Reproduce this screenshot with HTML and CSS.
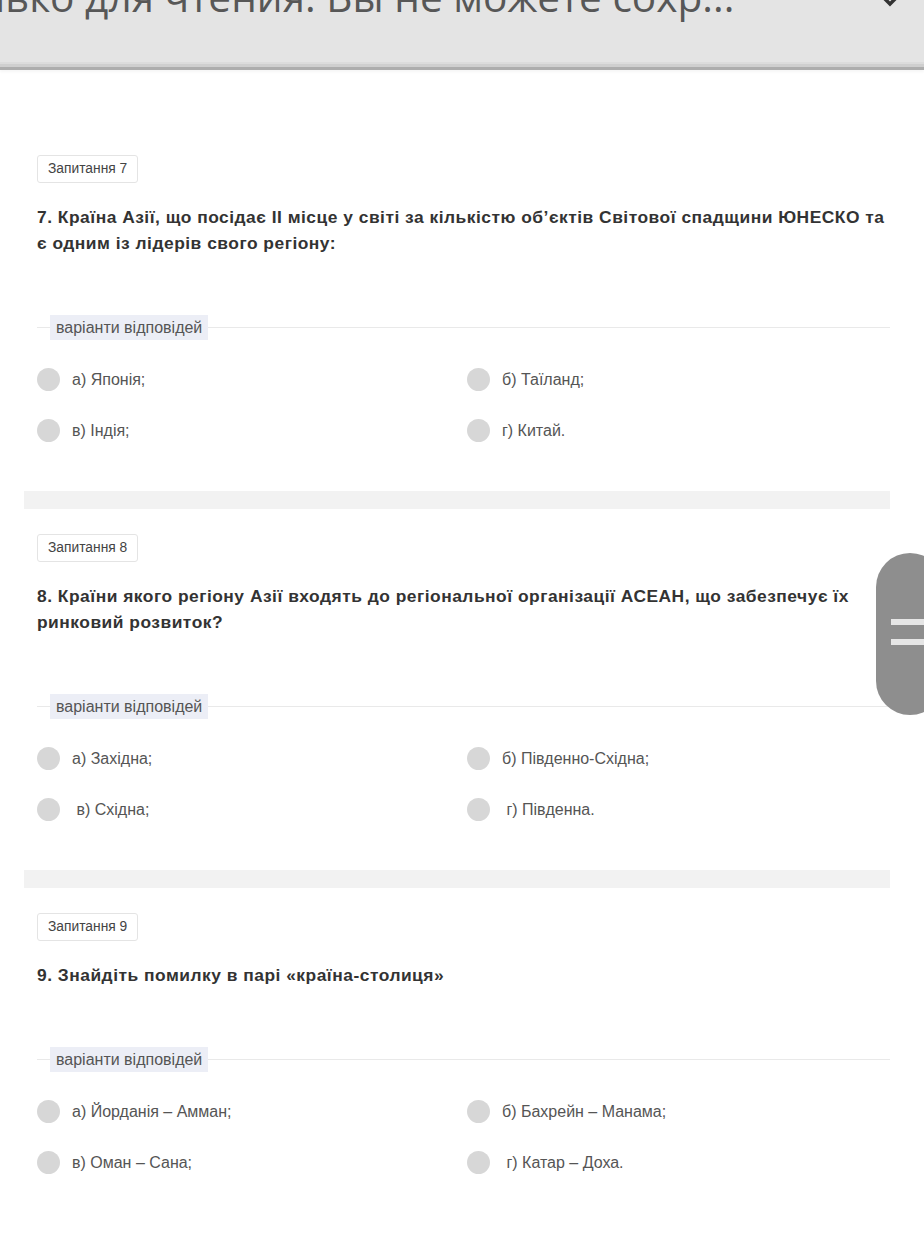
FILE: index.html
```html
<!DOCTYPE html>
<html lang="uk">
<head>
<meta charset="utf-8">
<title>Тест</title>
<link rel="stylesheet" href="styles.css">
</head>
<body>
<header class="topbar">
  <div class="topbar-text">лько для чтения. Вы не можете сохр...</div>
  <svg class="chevron" width="24" height="24" viewBox="0 0 24 24"><path d="M3 8 L12 17 L21 8" fill="none" stroke="#333" stroke-width="3.5"/></svg>
</header>
<div class="topbar-rule"></div>

<main class="quiz">
  <section class="question first">
    <div class="q-tag">Запитання 7</div>
    <h2 class="q-title">7. Країна Азії, що посідає ІІ місце у світі за кількістю об’єктів Світової спадщини ЮНЕСКО та є одним із лідерів свого регіону:</h2>
    <div class="answers">
      <div class="answers-head"><span class="answers-label">варіанти відповідей</span></div>
      <div class="options">
        <label class="option"><span class="radio"></span><span class="opt-text">а) Японія;</span></label>
        <label class="option"><span class="radio"></span><span class="opt-text">б) Таїланд;</span></label>
        <label class="option"><span class="radio"></span><span class="opt-text">в) Індія;</span></label>
        <label class="option"><span class="radio"></span><span class="opt-text">г) Китай.</span></label>
      </div>
    </div>
  </section>
  <div class="divider"></div>

  <section class="question">
    <div class="q-tag">Запитання 8</div>
    <h2 class="q-title">8. Країни якого регіону Азії входять до регіональної організації АСЕАН, що забезпечує їх ринковий розвиток?</h2>
    <div class="answers">
      <div class="answers-head"><span class="answers-label">варіанти відповідей</span></div>
      <div class="options">
        <label class="option"><span class="radio"></span><span class="opt-text">а) Західна;</span></label>
        <label class="option"><span class="radio"></span><span class="opt-text">б) Південно-Східна;</span></label>
        <label class="option"><span class="radio"></span><span class="opt-text">&nbsp;в) Східна;</span></label>
        <label class="option"><span class="radio"></span><span class="opt-text">&nbsp;г) Південна.</span></label>
      </div>
    </div>
  </section>
  <div class="divider"></div>

  <section class="question">
    <div class="q-tag">Запитання 9</div>
    <h2 class="q-title">9. Знайдіть помилку в парі «країна-столиця»</h2>
    <div class="answers">
      <div class="answers-head"><span class="answers-label">варіанти відповідей</span></div>
      <div class="options">
        <label class="option"><span class="radio"></span><span class="opt-text">а) Йорданія – Амман;</span></label>
        <label class="option"><span class="radio"></span><span class="opt-text">б) Бахрейн – Манама;</span></label>
        <label class="option"><span class="radio"></span><span class="opt-text">в) Оман – Сана;</span></label>
        <label class="option"><span class="radio"></span><span class="opt-text">&nbsp;г) Катар – Доха.</span></label>
      </div>
    </div>
  </section>
</main>

<div class="side-handle"><span class="handle-bar"></span><span class="handle-bar"></span></div>
</body>
</html>
```

FILE: styles.css
```css
* { box-sizing: border-box; }

html, body {
  margin: 0;
  padding: 0;
  background: #fff;
}

body {
  font-family: "Liberation Sans", Arial, sans-serif;
  color: #333;
  overflow: hidden;
}

.topbar {
  height: 62px;
  background: #e4e4e4;
  overflow: hidden;
  display: flex;
  align-items: flex-start;
}

.topbar-text {
  font-family: "Open Sans", sans-serif;
  font-size: 40.6px;
  line-height: 54px;
  color: #575757;
  white-space: nowrap;
  margin-top: -30px;
  margin-left: -18px;
}

.chevron {
  margin-left: auto;
  margin-right: 22px;
  margin-top: -13px;
}

.topbar-rule {
  height: 8px;
  background: linear-gradient(#dcdcdc 0 2px, #cfcfcf 2px 5px, #adadad 5px 8px);
  box-shadow: 0 2px 3px rgba(0, 0, 0, 0.04);
}

.quiz {
  width: 866px;
  margin-left: 24px;
  padding-top: 85px;
}

.question {
  padding: 25px 0 0 13px;
}

.question.first {
  padding-top: 0;
}

.q-tag {
  display: inline-block;
  height: 28px;
  padding: 0 10px;
  border: 1px solid #e4e4e4;
  border-radius: 3px;
  font-size: 13.8px;
  line-height: 26px;
  color: #444;
}

.q-title {
  margin: 21px 0 0;
  font-size: 17.4px;
  letter-spacing: 0.5px;
  font-weight: bold;
  line-height: 26px;
  color: #333;
}

.answers {
  margin-top: 59px;
}

.answers-head {
  height: 25px;
  display: flex;
  align-items: stretch;
  background: linear-gradient(#e9e9e9, #e9e9e9) 0 50% / 100% 1px no-repeat;
}

.answers-label {
  margin-left: 13px;
  padding: 0 6px;
  background: #eceef6;
  font-size: 16px;
  line-height: 25px;
  color: #555;
}

.options {
  display: grid;
  grid-template-columns: 430px 1fr;
  row-gap: 28px;
  margin-top: 28px;
  padding-bottom: 49px;
}

.option {
  display: flex;
  align-items: center;
  height: 23px;
}

.radio {
  width: 23px;
  height: 23px;
  border-radius: 50%;
  background: #d7d7d7;
  flex: none;
  margin-right: 12px;
}

.opt-text {
  font-size: 16px;
  color: #555;
  white-space: nowrap;
}

.divider {
  height: 18px;
  background: #f2f2f2;
}

.side-handle {
  position: fixed;
  top: 553px;
  right: -20px;
  width: 68px;
  height: 162px;
  border-radius: 36px;
  background: #8e8e8e;
  display: flex;
  flex-direction: column;
  gap: 14px;
  padding: 66px 0 0 15px;
}

.handle-bar {
  display: block;
  height: 6px;
  background: #e6e6e6;
}
```
